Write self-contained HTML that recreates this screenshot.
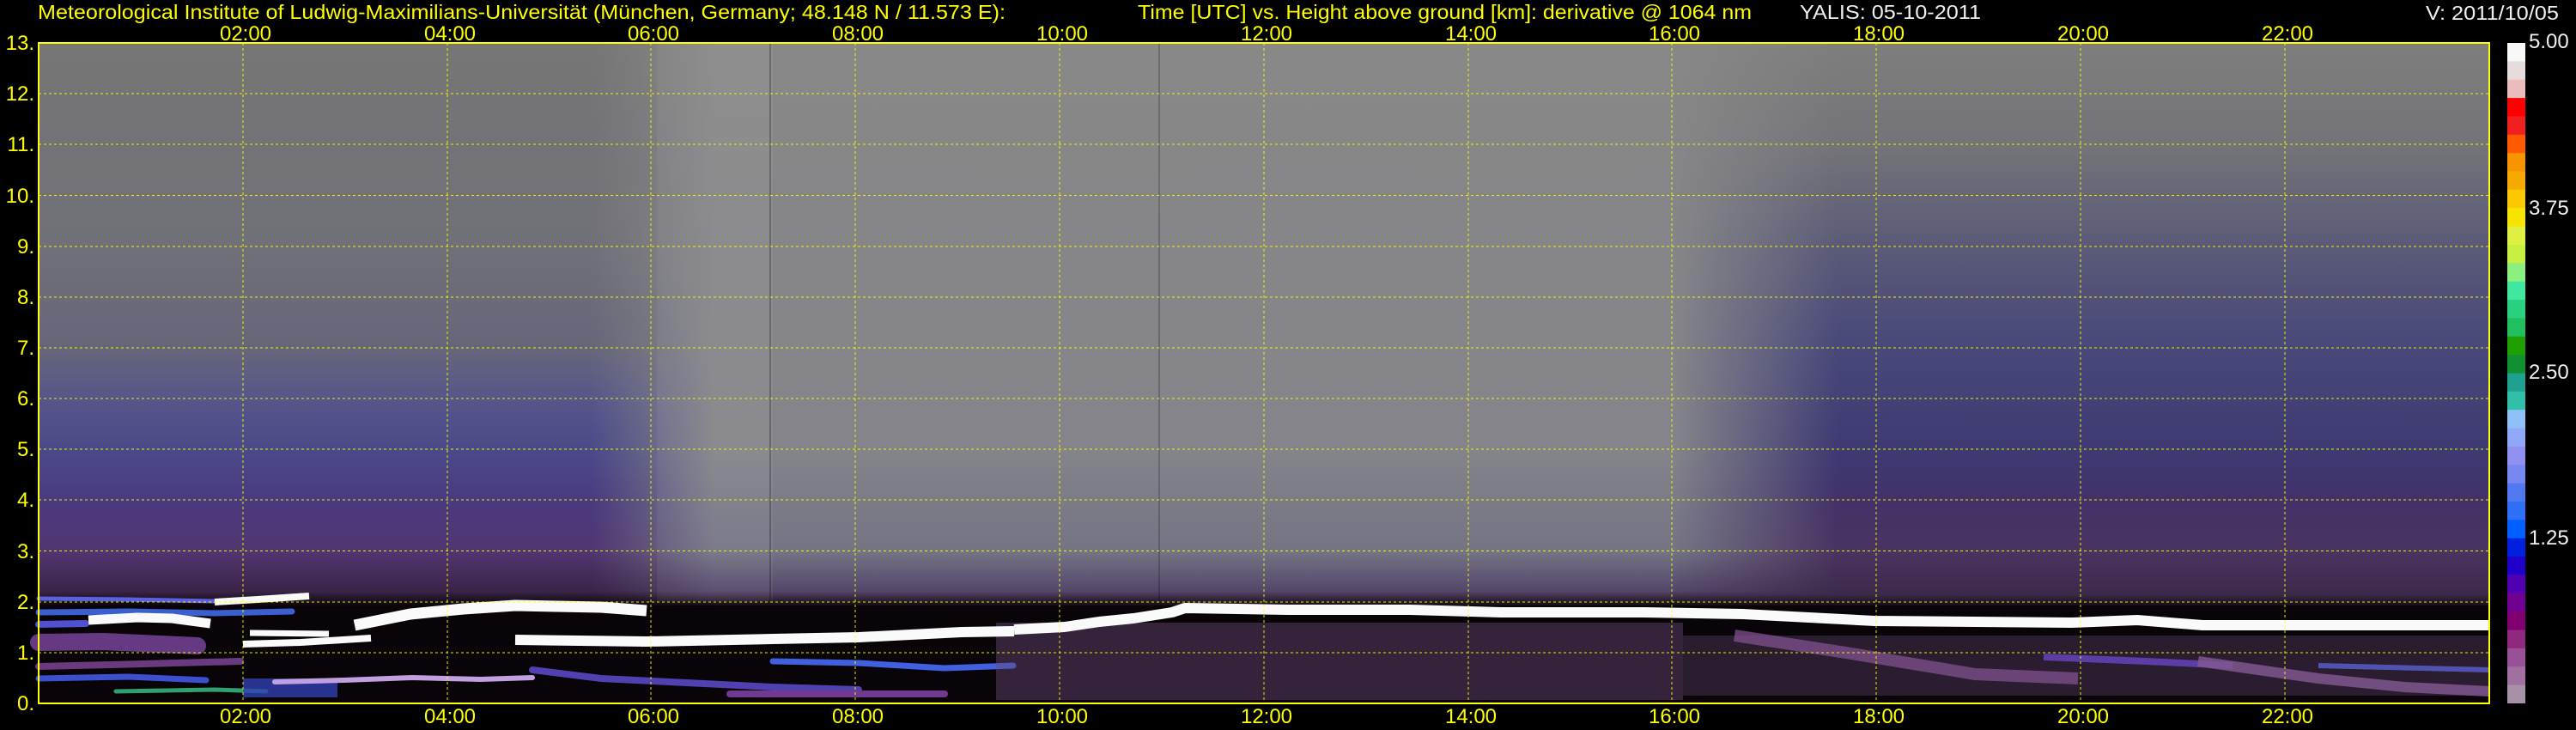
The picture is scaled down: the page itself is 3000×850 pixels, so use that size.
<!DOCTYPE html>
<html><head><meta charset="utf-8"><style>
html,body{margin:0;padding:0;background:#000;width:3000px;height:850px;overflow:hidden}
svg{display:block}
text{font-family:"Liberation Sans",Arial,sans-serif}
</style></head><body>
<svg width="3000" height="850" viewBox="0 0 3000 850" xmlns="http://www.w3.org/2000/svg">
<defs>
<linearGradient id="gMid" x1="0" y1="50" x2="0" y2="819" gradientUnits="userSpaceOnUse">
<stop offset="0" stop-color="#888888"/>
<stop offset="0.615" stop-color="#84848a"/>
<stop offset="0.77" stop-color="#747484"/>
<stop offset="0.83" stop-color="#54466a"/>
<stop offset="0.85" stop-color="#181018"/>
<stop offset="1" stop-color="#0c060c"/>
</linearGradient>
<linearGradient id="gLeft" x1="0" y1="50" x2="0" y2="819" gradientUnits="userSpaceOnUse">
<stop offset="0" stop-color="#767676"/>
<stop offset="0.308" stop-color="#707078"/>
<stop offset="0.462" stop-color="#66667a"/>
<stop offset="0.538" stop-color="#56568a"/>
<stop offset="0.615" stop-color="#4a4a88"/>
<stop offset="0.692" stop-color="#4a3a80"/>
<stop offset="0.77" stop-color="#503670"/>
<stop offset="0.83" stop-color="#3a2448"/>
<stop offset="0.85" stop-color="#100810"/>
<stop offset="1" stop-color="#0c060c"/>
</linearGradient>
<linearGradient id="gRight" x1="0" y1="50" x2="0" y2="819" gradientUnits="userSpaceOnUse">
<stop offset="0" stop-color="#7e7e7e"/>
<stop offset="0.154" stop-color="#747478"/>
<stop offset="0.308" stop-color="#5a5a78"/>
<stop offset="0.462" stop-color="#48487a"/>
<stop offset="0.615" stop-color="#3e3a72"/>
<stop offset="0.692" stop-color="#42326a"/>
<stop offset="0.77" stop-color="#4a3460"/>
<stop offset="0.835" stop-color="#3c2a4a"/>
<stop offset="0.855" stop-color="#100810"/>
<stop offset="1" stop-color="#0c060c"/>
</linearGradient>
<linearGradient id="mL" x1="45" y1="0" x2="830" y2="0" gradientUnits="userSpaceOnUse">
<stop offset="0" stop-color="#fff"/><stop offset="0.82" stop-color="#fff"/><stop offset="1" stop-color="#000"/>
</linearGradient>
<linearGradient id="mR" x1="1950" y1="0" x2="2899" y2="0" gradientUnits="userSpaceOnUse">
<stop offset="0" stop-color="#000"/><stop offset="0.2" stop-color="#fff"/><stop offset="1" stop-color="#fff"/>
</linearGradient>
<mask id="maskL"><rect x="45" y="50" width="800" height="770" fill="url(#mL)"/></mask>
<mask id="maskR"><rect x="1950" y="50" width="950" height="770" fill="url(#mR)"/></mask>
</defs>

<rect x="45" y="50" width="2854" height="769" fill="url(#gMid)"/>
<rect x="45" y="50" width="800" height="769" fill="url(#gLeft)" mask="url(#maskL)"/>
<rect x="1950" y="50" width="950" height="769" fill="url(#gRight)" mask="url(#maskR)"/>
<rect x="765" y="50" width="135" height="650" fill="#ffffff" opacity="0.05"/>
<rect x="896" y="50" width="2" height="650" fill="#000" opacity="0.25"/>
<rect x="1349" y="50" width="2" height="650" fill="#000" opacity="0.2"/>

<rect x="45" y="705" width="2854" height="114" fill="#080408"/>

<g fill="none" stroke-linecap="round">
<polyline points="45,697 150,698 250,700" stroke="#5a60e0" stroke-width="5"/>
<polyline points="45,713 150,712 250,714 340,712" stroke="#3a60d0" stroke-width="7"/>
<polyline points="45,727 100,726" stroke="#5050d0" stroke-width="8"/>
<polyline points="45,748 120,747 230,752" stroke="#704090" stroke-width="20" opacity="0.9"/>
<polyline points="45,776 130,774 280,770" stroke="#6a3a80" stroke-width="8"/>
<polyline points="45,790 150,788 240,792" stroke="#3a50d0" stroke-width="7"/>
<polyline points="135,805 250,803 310,805" stroke="#30a070" stroke-width="5"/>
<rect x="283" y="790" width="110" height="22" fill="#3040b0" opacity="0.8"/>
<polyline points="320,794 400,792 480,789 560,791 620,789" stroke="#c0a0e0" stroke-width="6"/>
<polyline points="620,780 700,790 800,795 900,800 1000,803" stroke="#5040b0" stroke-width="8"/>
<polyline points="900,770 1000,772 1100,778 1180,775" stroke="#4060e0" stroke-width="7"/>
<polyline points="850,808 1100,808" stroke="#703a90" stroke-width="8"/>
</g>
<rect x="1160" y="725" width="800" height="90" fill="#6a4a7a" opacity="0.45"/>
<g fill="none">
<polyline points="2020,740 2150,760 2300,785 2420,790" stroke="#7a4a8a" stroke-width="14" opacity="0.8"/>
<polyline points="2380,765 2500,770 2600,775" stroke="#5030b0" stroke-width="8"/>
<polyline points="2560,770 2700,790 2800,800 2899,805" stroke="#8a5a9a" stroke-width="12" opacity="0.8"/>
<polyline points="2700,775 2899,780" stroke="#4050c0" stroke-width="6"/>
<rect x="1960" y="740" width="940" height="70" fill="#7a5a8a" opacity="0.3"/>
</g>

<g fill="none" stroke="#fafafa" stroke-linejoin="round">
<polyline points="250,701 300,698 360,694" stroke-width="8"/>
<polyline points="103,722 160,719 200,720 245,726" stroke-width="11"/>
<polyline points="291,737 383,738" stroke-width="7"/>
<polyline points="283,750 350,748 432,743" stroke-width="8"/>
<polyline points="413,728 478,715 540,709 600,705 700,707 753,711" stroke-width="13"/>
<polyline points="600,745 753,747 900,744 1000,742 1120,736 1181,735" stroke-width="12"/>
<polyline points="1181,733 1240,730 1280,724 1320,720 1365,713 1380,708 1500,710 1641,710 1748,713 1915,713 2030,715 2183,723 2412,725 2489,722 2565,728 2718,728 2899,728" stroke-width="12"/>
</g>

<g stroke="#ffff00" stroke-width="1" stroke-dasharray="3,3" opacity="0.9">
<line x1="45" y1="109" x2="2899" y2="109"/><line x1="45" y1="168" x2="2899" y2="168"/>
<line x1="45" y1="227.5" x2="2899" y2="227.5"/><line x1="45" y1="287" x2="2899" y2="287"/>
<line x1="45" y1="346" x2="2899" y2="346"/><line x1="45" y1="405" x2="2899" y2="405"/>
<line x1="45" y1="464" x2="2899" y2="464"/><line x1="45" y1="523" x2="2899" y2="523"/>
<line x1="45" y1="582" x2="2899" y2="582"/><line x1="45" y1="641.5" x2="2899" y2="641.5"/>
<line x1="45" y1="701" x2="2899" y2="701"/><line x1="45" y1="760" x2="2899" y2="760"/>
<line x1="283" y1="50" x2="283" y2="819"/><line x1="521" y1="50" x2="521" y2="819"/>
<line x1="758" y1="50" x2="758" y2="819"/><line x1="996" y1="50" x2="996" y2="819"/>
<line x1="1234" y1="50" x2="1234" y2="819"/><line x1="1472" y1="50" x2="1472" y2="819"/>
<line x1="1710" y1="50" x2="1710" y2="819"/><line x1="1947" y1="50" x2="1947" y2="819"/>
<line x1="2185" y1="50" x2="2185" y2="819"/><line x1="2423" y1="50" x2="2423" y2="819"/>
<line x1="2661" y1="50" x2="2661" y2="819"/>
</g>
<rect x="45" y="50" width="2854" height="769" fill="none" stroke="#ffff00" stroke-width="2"/>

<g>
<rect x="2920" y="50.0" width="21" height="21.8" fill="#f8f8f8"/>
<rect x="2920" y="71.4" width="21" height="21.8" fill="#e6dcdc"/>
<rect x="2920" y="92.7" width="21" height="21.8" fill="#ecbcbc"/>
<rect x="2920" y="114.1" width="21" height="21.8" fill="#ff0000"/>
<rect x="2920" y="135.4" width="21" height="21.8" fill="#f02020"/>
<rect x="2920" y="156.8" width="21" height="21.8" fill="#ff5a00"/>
<rect x="2920" y="178.2" width="21" height="21.8" fill="#f79400"/>
<rect x="2920" y="199.5" width="21" height="21.8" fill="#f7aa00"/>
<rect x="2920" y="220.9" width="21" height="21.8" fill="#fcc800"/>
<rect x="2920" y="242.2" width="21" height="21.8" fill="#f7e400"/>
<rect x="2920" y="263.6" width="21" height="21.8" fill="#e0f040"/>
<rect x="2920" y="285.0" width="21" height="21.8" fill="#c8f040"/>
<rect x="2920" y="306.3" width="21" height="21.8" fill="#8cf080"/>
<rect x="2920" y="327.7" width="21" height="21.8" fill="#40e8a0"/>
<rect x="2920" y="349.0" width="21" height="21.8" fill="#28d080"/>
<rect x="2920" y="370.4" width="21" height="21.8" fill="#20c060"/>
<rect x="2920" y="391.8" width="21" height="21.8" fill="#20a000"/>
<rect x="2920" y="413.1" width="21" height="21.8" fill="#109030"/>
<rect x="2920" y="434.5" width="21" height="21.8" fill="#20a090"/>
<rect x="2920" y="455.8" width="21" height="21.8" fill="#30c0a8"/>
<rect x="2920" y="477.2" width="21" height="21.8" fill="#90c0f8"/>
<rect x="2920" y="498.6" width="21" height="21.8" fill="#90a8f8"/>
<rect x="2920" y="519.9" width="21" height="21.8" fill="#9090f0"/>
<rect x="2920" y="541.3" width="21" height="21.8" fill="#7888f0"/>
<rect x="2920" y="562.6" width="21" height="21.8" fill="#5078f0"/>
<rect x="2920" y="584.0" width="21" height="21.8" fill="#3070f8"/>
<rect x="2920" y="605.4" width="21" height="21.8" fill="#0060ff"/>
<rect x="2920" y="626.7" width="21" height="21.8" fill="#0020e0"/>
<rect x="2920" y="648.1" width="21" height="21.8" fill="#2000c8"/>
<rect x="2920" y="669.4" width="21" height="21.8" fill="#5000b0"/>
<rect x="2920" y="690.8" width="21" height="21.8" fill="#700090"/>
<rect x="2920" y="712.2" width="21" height="21.8" fill="#800070"/>
<rect x="2920" y="733.5" width="21" height="21.8" fill="#902880"/>
<rect x="2920" y="754.9" width="21" height="21.8" fill="#985098"/>
<rect x="2920" y="776.2" width="21" height="21.8" fill="#a070a0"/>
<rect x="2920" y="797.6" width="21" height="21.4" fill="#a890a8"/>
</g>
<g fill="#f0f0f0" font-size="24">
<text x="2945" y="56">5.00</text>
<text x="2945" y="250">3.75</text>
<text x="2945" y="441">2.50</text>
<text x="2945" y="634">1.25</text>
</g>

<text x="44" y="22" font-size="23" fill="#ffff00" textLength="1127" lengthAdjust="spacingAndGlyphs">Meteorological Institute of Ludwig-Maximilians-Universität (München, Germany; 48.148 N / 11.573 E):</text>
<text x="1325" y="22" font-size="23" fill="#ffff00" textLength="715" lengthAdjust="spacingAndGlyphs">Time [UTC] vs. Height above ground [km]: derivative @ 1064 nm</text>
<text x="2096" y="22" font-size="23" fill="#f0f0f0" textLength="211" lengthAdjust="spacingAndGlyphs">YALIS: 05-10-2011</text>
<text x="2825" y="23" font-size="23" fill="#f0f0f0" textLength="155" lengthAdjust="spacingAndGlyphs">V: 2011/10/05</text>

<g fill="#ffff00" font-size="24" text-anchor="middle">
<text x="286" y="47">02:00</text><text x="524" y="47">04:00</text><text x="761" y="47">06:00</text>
<text x="999" y="47">08:00</text><text x="1237" y="47">10:00</text><text x="1475" y="47">12:00</text>
<text x="1713" y="47">14:00</text><text x="1950" y="47">16:00</text><text x="2188" y="47">18:00</text>
<text x="2426" y="47">20:00</text><text x="2664" y="47">22:00</text>
</g>
<g fill="#ffff00" font-size="24" text-anchor="middle">
<text x="286" y="842">02:00</text><text x="524" y="842">04:00</text><text x="761" y="842">06:00</text>
<text x="999" y="842">08:00</text><text x="1237" y="842">10:00</text><text x="1475" y="842">12:00</text>
<text x="1713" y="842">14:00</text><text x="1950" y="842">16:00</text><text x="2188" y="842">18:00</text>
<text x="2426" y="842">20:00</text><text x="2664" y="842">22:00</text>
</g>
<g fill="#ffff00" font-size="24" text-anchor="end">
<text x="40" y="58">13.</text><text x="40" y="117">12.</text><text x="40" y="176">11.</text>
<text x="40" y="236">10.</text><text x="40" y="295">9.</text><text x="40" y="354">8.</text>
<text x="40" y="413">7.</text><text x="40" y="472">6.</text><text x="40" y="531">5.</text>
<text x="40" y="590">4.</text><text x="40" y="650">3.</text><text x="40" y="709">2.</text>
<text x="40" y="768">1.</text><text x="40" y="827">0.</text>
</g>
</svg>
</body></html>
